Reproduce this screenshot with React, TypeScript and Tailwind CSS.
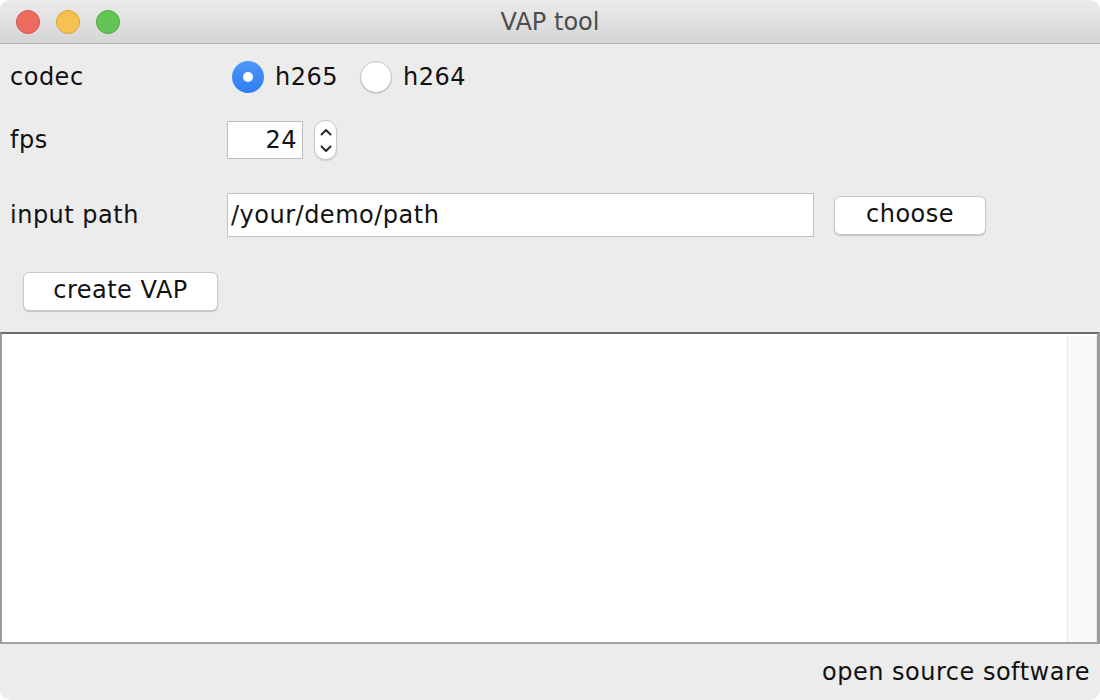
import { useState } from "react";

/**
 * "VAP tool" — a small Swing-style desktop window on macOS.
 * Title bar with traffic lights, a form (codec / fps / input path),
 * an output log area with a scrollbar track, and a status footer.
 */
export default function App() {
  const [codec, setCodec] = useState<"h265" | "h264">("h265");
  const [fps, setFps] = useState(24);
  const [path, setPath] = useState("/your/demo/path");

  return (
    <div className="h-[700px] w-[1100px] bg-white font-['DejaVu_Sans',sans-serif] text-[24px] tracking-[0.5px] text-[#111]">
      <div className="flex h-full w-full flex-col overflow-hidden rounded-[10px] bg-[#ececec]">
        {/* Title bar */}
        <div className="relative flex h-[44px] shrink-0 items-center justify-center border-b border-[#b3b3b3] bg-gradient-to-b from-[#ebebeb] to-[#d5d5d5]">
          <div className="absolute left-[16px] top-[10px] flex gap-[16px]">
            <span className="h-[24px] w-[24px] rounded-full border border-[#d5544a] bg-[#ee6a5f]" />
            <span className="h-[24px] w-[24px] rounded-full border border-[#d8a43f] bg-[#f6c150]" />
            <span className="h-[24px] w-[24px] rounded-full border border-[#4fa83e] bg-[#62c655]" />
          </div>
          <span className="tracking-normal text-[#4d4d4d]">VAP tool</span>
        </div>

        {/* Form */}
        <div className="flex shrink-0 flex-col pt-[16px]">
          <div className="flex h-[34px] items-center">
            <span className="w-[232px] pl-[10px]">codec</span>
            <Radio label="h265" checked={codec === "h265"} onClick={() => setCodec("h265")} />
            <span className="w-[22px]" />
            <Radio label="h264" checked={codec === "h264"} onClick={() => setCodec("h264")} />
          </div>

          <div className="mt-[26px] flex h-[40px] items-center">
            <span className="w-[227px] pl-[10px]">fps</span>
            <input
              value={fps}
              onChange={(e) => setFps(Number(e.target.value) || 0)}
              className="h-[38px] w-[76px] border border-[#bdbdbd] bg-white pr-[5px] text-right outline-none"
            />
            <div className="ml-[11px] flex h-[40px] w-[23px] flex-col items-center justify-center rounded-[11px] border border-[#c9c9c9] bg-white shadow-[0_1px_1px_rgba(0,0,0,0.12)]">
              <button type="button" onClick={() => setFps((v) => v + 1)} className="flex h-[14px] items-center">
                <svg width="12" height="8" viewBox="0 0 12 8" fill="none">
                  <path d="M1.5 6.5l4.5-4.5 4.5 4.5" stroke="#2b2b2b" strokeWidth="2" strokeLinecap="round" strokeLinejoin="round" />
                </svg>
              </button>
              <button type="button" onClick={() => setFps((v) => Math.max(0, v - 1))} className="mt-[3px] flex h-[14px] items-center">
                <svg width="12" height="8" viewBox="0 0 12 8" fill="none">
                  <path d="M1.5 1.5l4.5 4.5 4.5-4.5" stroke="#2b2b2b" strokeWidth="2" strokeLinecap="round" strokeLinejoin="round" />
                </svg>
              </button>
            </div>
          </div>

          <div className="mt-[33px] flex h-[44px] items-center">
            <span className="w-[227px] pl-[10px]">input path</span>
            <input
              value={path}
              onChange={(e) => setPath(e.target.value)}
              className="h-[44px] w-[587px] border border-[#c2c2c2] bg-white pl-[3px] outline-none"
            />
            <MacButton className="ml-[20px] w-[152px]">choose</MacButton>
          </div>

          <div className="mt-[34px] flex h-[40px] items-center pl-[23px]">
            <MacButton className="w-[195px]">create VAP</MacButton>
          </div>
        </div>

        {/* Log area */}
        <div className="mt-[21px] flex h-[312px] shrink-0 border-t-2 border-b-2 border-l-2 border-r-[3px] border-t-[#6b6b6b] border-b-[#a0a0a0] border-l-[#9c9c9c] border-r-[#9c9c9c] bg-white">
          <div className="flex-1" />
          <div className="mt-[2px] w-[30px] border-l border-r border-[#e9e9e9] bg-[#f9f9f9]" />
        </div>

        {/* Footer */}
        <div className="flex flex-1 items-center justify-end pr-[10px]">
          <span>open source software</span>
        </div>
      </div>
    </div>
  );
}

function Radio({ label, checked, onClick }: { label: string; checked: boolean; onClick: () => void }) {
  return (
    <button type="button" onClick={onClick} className="flex items-center gap-[11px]">
      {checked ? (
        <span className="flex h-[32px] w-[32px] items-center justify-center rounded-full bg-gradient-to-b from-[#4d97f7] to-[#2f7df3]">
          <span className="h-[10px] w-[10px] rounded-full bg-white" />
        </span>
      ) : (
        <span className="h-[32px] w-[32px] rounded-full border border-[#c4c4c4] bg-white shadow-[0_1px_1px_rgba(0,0,0,0.15)]" />
      )}
      <span>{label}</span>
    </button>
  );
}

function MacButton({ children, className }: { children: React.ReactNode; className?: string }) {
  return (
    <button
      type="button"
      className={`flex h-[39px] items-center justify-center rounded-[6px] border border-[#c8c8c8] bg-white pb-[2px] shadow-[0_1px_1px_rgba(0,0,0,0.18)] ${className ?? ""}`}
    >
      {children}
    </button>
  );
}
